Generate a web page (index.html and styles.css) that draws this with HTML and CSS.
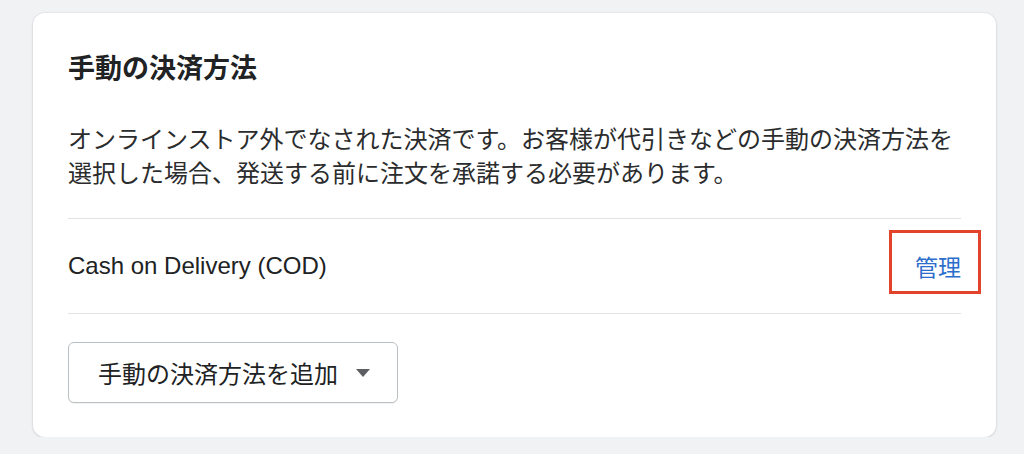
FILE: index.html
```html
<!DOCTYPE html>
<html lang="ja">
<head>
    <meta charset="UTF-8">
    <meta name="viewport" content="width=device-width, initial-scale=1.0">
    <title>手動の決済方法</title>
    <link rel="stylesheet" href="styles.css">
</head>
<body>
    <section class="card">
        <h2 class="card-title">手動の決済方法</h2>
        <p class="card-text">オンラインストア外でなされた決済です。お客様が代引きなどの手動の決済方法を選択した場合、発送する前に注文を承諾する必要があります。</p>

        <div class="method-row">
            <span class="method-name">Cash on Delivery (COD)</span>
            <a href="#" class="manage-link">管理</a>
        </div>

        <div class="card-footer">
            <button class="add-button">
                手動の決済方法を追加
                <svg class="caret" width="14" height="8" viewBox="0 0 14 8"><path d="M0 0h14L7 8z" fill="#5c5f62"/></svg>
            </button>
        </div>
    </section>
</body>
</html>
```

FILE: styles.css
```css
body {
    margin: 0;
    padding: 13px 28px 0 33px;
    background-color: #f1f2f4;
    color: #202223;
    font-family: 'Liberation Sans', 'Noto Sans CJK JP', sans-serif;
}

.card {
    width: 963px;
    height: 424px;
    box-sizing: border-box;
    padding: 40px 35px 0 35px;
    background-color: #fff;
    border-radius: 12px;
    box-shadow: 0 1px 3px rgba(23, 24, 24, 0.12), 0 0 0 1px rgba(63, 63, 68, 0.04);
}

.card-title {
    margin: 0;
    font-size: 27px;
    line-height: 32px;
    font-weight: 600;
}

.card-text {
    margin: 38px 0 0;
    font-size: 24px;
    line-height: 34px;
    color: #2b2c2d;
}

.method-row {
    display: flex;
    justify-content: space-between;
    align-items: center;
    margin-top: 27px;
    height: 94px;
    border-top: 1px solid #e1e3e5;
    border-bottom: 1px solid #e1e3e5;
    font-size: 24px;
}

.manage-link {
    position: relative;
    color: #2c6ecb;
    text-decoration: none;
    font-size: 23px;
}

.manage-link::after {
    content: '';
    position: absolute;
    top: -19px;
    bottom: -11px;
    left: -26px;
    right: -20px;
    border: 3px solid #e4432b;
}

.card-footer {
    padding-top: 28px;
}

.add-button {
    display: flex;
    align-items: center;
    gap: 18px;
    height: 61px;
    padding: 0 27px 0 29px;
    background-color: #fff;
    border: 1.5px solid #babfc3;
    border-radius: 6px;
    box-shadow: 0 1px 0 rgba(0, 0, 0, 0.05);
    color: #202223;
    font-family: inherit;
    font-size: 24px;
    cursor: pointer;
}

.caret {
    width: 14px;
    height: 8px;
}
```
